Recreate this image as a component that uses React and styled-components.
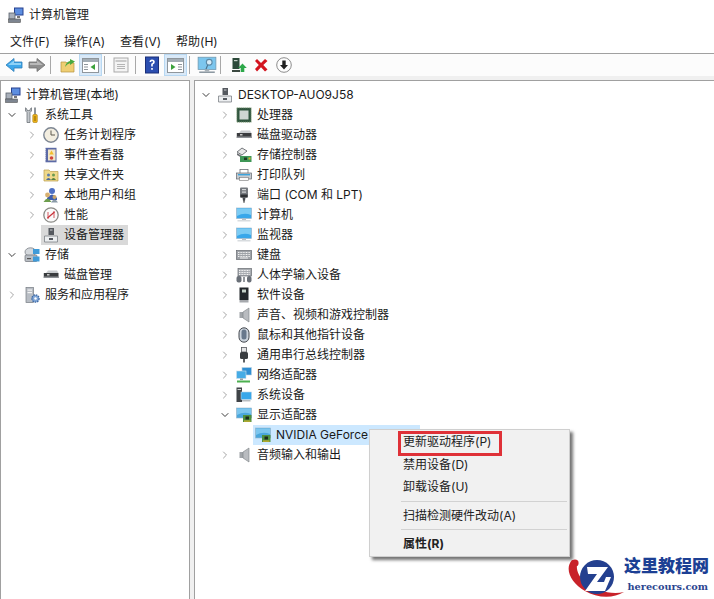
import React from "react";
import styled, { createGlobalStyle } from "styled-components";
import { ChevronRight, ChevronDown } from "lucide-react";

const GlobalStyle = createGlobalStyle`
  html, body { margin: 0; padding: 0; height: 100%; background: #fff; overflow: hidden; }
  #root { height: 100%; }
`;

// little device icons, all on a 16x16 grid
const glyphs = {
  mgmt: (
    <>
      <rect x="6" y="0.5" width="9.5" height="8" fill="#27408f" />
      <rect x="7" y="1.5" width="7.5" height="6" fill="#5d8ee0" />
      <rect x="1" y="6" width="6" height="6" fill="#a9b0ba" stroke="#59616c" strokeWidth="0.8" />
      <rect x="0.5" y="12" width="12" height="3.5" fill="#7d8590" stroke="#555" strokeWidth="0.6" />
      <rect x="9" y="9" width="3" height="2" fill="#777" />
    </>
  ),
  tools: (
    <>
      <path d="M1.5 0.8 V4 L3 5.5 V15.5 H6 V5.5 L7.5 4 V0.8 L6 2.2 V3.6 H3 V2.2 z" fill="#c4c8cc" stroke="#5e646b" strokeWidth="0.7" />
      <rect x="10" y="0.5" width="2" height="7" fill="#8f959b" />
      <rect x="8.8" y="7.5" width="4.5" height="8" rx="1" fill="#eeb418" stroke="#a87a10" strokeWidth="0.6" />
      <rect x="10.5" y="9" width="1" height="5" fill="#8a6206" />
    </>
  ),
  clock: (
    <>
      <circle cx="8" cy="8" r="7.2" fill="#f3eee0" stroke="#7d8692" strokeWidth="1.4" />
      <path d="M8 3.5 V8 H12" fill="none" stroke="#5e5a4e" strokeWidth="1" />
    </>
  ),
  event: (
    <>
      <rect x="2.5" y="0.8" width="11" height="14.5" fill="#5c6aa6" />
      <path d="M2.5 2 v12" stroke="#d3d6e6" strokeWidth="1" strokeDasharray="1 1" />
      <rect x="5" y="2.5" width="7.5" height="11" fill="#f2e6c8" />
      <path d="M8.5 3.5 l2.3 4 h-4.6 z" fill="#f2bd2c" />
      <circle cx="8.5" cy="11" r="1.8" fill="#d2463c" />
    </>
  ),
  shared: (
    <>
      <path d="M1 3 h5 l1.5 1.5 H15 V14 H1 z" fill="#efd98a" stroke="#b99c4c" strokeWidth="0.7" />
      <circle cx="5.5" cy="8" r="1.5" fill="#5c7fb0" />
      <path d="M3 13 q2.5-4 5 0 z" fill="#4f6b97" />
      <circle cx="10.5" cy="8" r="1.5" fill="#6a9b52" />
      <path d="M8 13 q2.5-4 5 0 z" fill="#57803f" />
    </>
  ),
  users: (
    <>
      <circle cx="9" cy="4" r="3" fill="#4e70c4" />
      <path d="M4 11 q5-7 10 0 v2 H4 z" fill="#3d5dae" />
      <circle cx="4.5" cy="8" r="2.4" fill="#d8b070" />
      <path d="M0.5 15 q4-7 8 0 z" fill="#6d9e4e" />
      <circle cx="11.5" cy="10" r="2" fill="#c8a468" />
      <path d="M8 15.5 q3.5-6 7 0 z" fill="#8a9aa8" />
    </>
  ),
  perf: (
    <>
      <circle cx="8" cy="8" r="7.2" fill="#fafafa" stroke="#8a8a86" strokeWidth="1.3" />
      <path d="M4.5 11 L11.5 5" stroke="#c8323a" strokeWidth="1.3" />
      <path d="M5 12 V5 M11 11 V4" fill="none" stroke="#c8323a" strokeWidth="0.8" />
    </>
  ),
  device: (
    <>
      <rect x="5.5" y="1" width="5.5" height="7" fill="#55595f" />
      <rect x="7" y="2.5" width="2.5" height="1" fill="#c9ccd0" />
      <path d="M1.5 9 h13 V15 H1.5 z" fill="#eceef0" stroke="#7d8187" strokeWidth="0.8" />
      <rect x="6" y="11" width="4" height="2" fill="#55595f" />
    </>
  ),
  storage: (
    <>
      <ellipse cx="6.5" cy="5" rx="5.5" ry="4.2" fill="#d4d8dc" stroke="#7b8087" strokeWidth="0.8" />
      <rect x="1" y="8" width="12" height="6.5" rx="1" fill="#b9bec4" stroke="#6b7077" strokeWidth="0.7" />
      <rect x="9" y="2" width="6.5" height="5" fill="#3f9bd9" />
      <rect x="9" y="9.5" width="6.5" height="5" fill="#3f9bd9" />
      <rect x="3" y="11" width="4" height="1.2" fill="#555" />
    </>
  ),
  disk: (
    <>
      <path d="M3 6 L5 3.5 H14 L15.5 6 z" fill="#c9cccf" />
      <rect x="0.8" y="6" width="14.7" height="5" fill="#3a3c3f" />
      <rect x="0.8" y="9.5" width="14.7" height="1.5" fill="#8e9196" />
      <rect x="4" y="7.2" width="2.5" height="1.2" fill="#e9e9e9" />
    </>
  ),
  services: (
    <>
      <rect x="2" y="0.5" width="7.5" height="15" fill="#b8bdc4" stroke="#767b82" strokeWidth="0.7" />
      <rect x="3.5" y="2.5" width="4.5" height="1.2" fill="#f4f4f4" />
      <rect x="3.5" y="5" width="4.5" height="1.2" fill="#f4f4f4" />
      <circle cx="11.5" cy="11.5" r="3.6" fill="#7fa5d6" stroke="#3f6aa6" strokeWidth="1.3" strokeDasharray="1.6 0.8" />
      <circle cx="11.5" cy="11.5" r="1.2" fill="#fff" />
    </>
  ),
  cpu: (
    <>
      <rect x="0.8" y="0.8" width="14.4" height="14.4" fill="#31563f" stroke="#9ab18c" strokeWidth="0.8" strokeDasharray="1 1" />
      <rect x="3.5" y="3.5" width="9" height="9" fill="#cfd6d2" />
    </>
  ),
  controller: (
    <>
      <path d="M1 5 L6 1 l5 3 -5 4 z" fill="#e7e7e7" stroke="#56595e" strokeWidth="0.8" />
      <path d="M1 6 L6 9 v2 L1 8 z" fill="#6c6f73" />
      <rect x="4" y="9" width="11.5" height="6" fill="#3f9757" />
      <rect x="8" y="10.5" width="3" height="2.5" fill="#1d3b24" />
      <rect x="12.5" y="10.5" width="2" height="2" fill="#d7b42c" />
    </>
  ),
  printer: (
    <>
      <rect x="4" y="2.5" width="8" height="4" fill="#fff" stroke="#6d7177" strokeWidth="0.8" />
      <rect x="0.5" y="6" width="15" height="6" fill="#c6cbd0" stroke="#62666c" strokeWidth="0.7" />
      <rect x="2" y="7" width="12" height="1.4" fill="#3aa3dd" />
      <rect x="3.5" y="10.5" width="9" height="3" fill="#fafafa" stroke="#777" strokeWidth="0.6" />
    </>
  ),
  port: (
    <>
      <rect x="4" y="0.5" width="8" height="10" rx="1" fill="#75797e" />
      <rect x="6" y="2" width="4" height="1.2" fill="#d4d6d8" />
      <rect x="6" y="4.5" width="4" height="1.2" fill="#d4d6d8" />
      <rect x="4.5" y="7.5" width="7" height="3" fill="#2f3134" />
      <path d="M6.5 10.5 h3 l-.5 3.2 h-2 z" fill="#46494d" />
      <rect x="7.4" y="13.5" width="1.2" height="2.2" fill="#333" />
    </>
  ),
  monitor: (
    <>
      <rect x="0.5" y="1" width="15" height="10.5" fill="#38a7ea" stroke="#9ab4c8" strokeWidth="0.6" />
      <path d="M1 1.5 H15 V8 Q8 5 1 9 z" fill="#7ccbf3" />
      <rect x="6" y="11.5" width="4" height="1.5" fill="#b9c0c6" />
      <rect x="1.5" y="13" width="13" height="1.5" fill="#d8dcdf" />
    </>
  ),
  keyboard: (
    <>
      <rect x="0.5" y="3.5" width="15" height="9" fill="#9fa3a8" stroke="#666a6f" strokeWidth="0.7" />
      <path d="M2 5.5 h12 M2 7.5 h12 M2 9.5 h12" stroke="#f2f2f2" strokeWidth="1" strokeDasharray="1 .6" />
      <rect x="4" y="10.5" width="8" height="1" fill="#eee" />
    </>
  ),
  hid: (
    <>
      <rect x="2" y="1.5" width="13.5" height="7.5" fill="#a9adb2" stroke="#666a6f" strokeWidth="0.7" />
      <path d="M3 3.5 h11 M3 5.5 h11 M3 7.5 h11" stroke="#f4f4f4" strokeWidth="1" strokeDasharray="1 .6" />
      <rect x="0.5" y="9" width="5" height="6.5" rx="2" fill="#6a7078" />
      <rect x="11" y="9" width="4.5" height="6.5" rx="2" fill="#6a7078" />
      <rect x="7" y="10" width="2" height="5" fill="#93979c" />
    </>
  ),
  software: (
    <>
      <rect x="3.5" y="0.5" width="9" height="12.5" fill="#23272b" />
      <rect x="6" y="2.5" width="4" height="3" fill="#c5d1c8" />
      <rect x="3.5" y="13" width="9" height="2.5" fill="#a6a9ad" />
    </>
  ),
  sound: (
    <>
      <rect x="3.5" y="5" width="3.5" height="6" fill="#a2a6aa" />
      <path d="M7 5 L13 1 V15 L7 11 z" fill="#b9bcc0" stroke="#7b7f83" strokeWidth="0.6" />
    </>
  ),
  mouse: (
    <>
      <rect x="3" y="0.8" width="10" height="14.4" rx="5" fill="#cbd3dc" stroke="#44484e" strokeWidth="1" />
      <rect x="5.5" y="2.5" width="5" height="10" rx="2.5" fill="#68788c" />
    </>
  ),
  usb: (
    <>
      <rect x="5.5" y="0.5" width="5" height="4.5" fill="#e4e5e6" stroke="#55585c" strokeWidth="0.8" />
      <rect x="4" y="5" width="8" height="7" rx="1.5" fill="#3a3d41" />
      <rect x="7" y="12" width="2" height="3.5" fill="#5c5f63" />
    </>
  ),
  network: (
    <>
      <rect x="6" y="0.5" width="9.5" height="7.5" fill="#2f8fd3" stroke="#bcd4e4" strokeWidth="0.6" />
      <rect x="0.5" y="4" width="9.5" height="7.5" fill="#46ace6" stroke="#cfe0ea" strokeWidth="0.6" />
      <rect x="4" y="11.5" width="3" height="1.5" fill="#9aa0a5" />
      <rect x="1" y="13.5" width="13" height="2" fill="#4cb050" />
    </>
  ),
  system: (
    <>
      <rect x="0.5" y="0.5" width="5.5" height="14.5" fill="#3f4347" />
      <rect x="1.5" y="2" width="3.5" height="1" fill="#cfcfcf" />
      <rect x="5" y="5" width="10.5" height="7.5" fill="#38a7ea" stroke="#bcd4e4" strokeWidth="0.6" />
      <rect x="6" y="13" width="8.5" height="1.5" fill="#b9bec2" />
    </>
  ),
  display: (
    <>
      <rect x="0.5" y="1" width="15" height="10" fill="#4aa7dc" stroke="#9ab4c8" strokeWidth="0.6" />
      <path d="M1 1.5 H15 V7 Q8 4 1 8 z" fill="#7cc6ee" />
      <rect x="7" y="8" width="8.5" height="7" fill="#4d8f3f" />
      <rect x="9.5" y="9.5" width="3.5" height="3" fill="#1b2a1d" />
      <rect x="8" y="13.5" width="6.5" height="1.2" fill="#d7b42c" />
    </>
  ),
};

const Icon = styled.svg`
  width: ${(p) => p.$w || p.$size || 16}px;
  height: ${(p) => p.$h || p.$size || 16}px;
  flex: none;
  display: block;
`;

const Dev = ({ name }) => <Icon viewBox="0 0 16 16">{glyphs[name]}</Icon>;

const Window = styled.div`
  width: 714px;
  height: 599px;
  position: relative;
  overflow: hidden;
  display: flex;
  flex-direction: column;
  background: #fff;
  color: #1a1a1a;
  font: 12px/20px Inter, "Noto Sans CJK SC", sans-serif;
`;

const TitleBar = styled.div`
  height: 30px;
  display: flex;
  align-items: center;
  gap: 5px;
  padding-left: 8px;
  box-sizing: border-box;
  color: #222;
`;

const MenuBar = styled.div`
  height: 23px;
  display: flex;
  align-items: center;
  padding: 1px 0 0 10px;
  box-sizing: border-box;
  gap: 17px;
  height: 24px;
  border-bottom: 1px solid #a0a0a0;
`;

const MenuName = styled.span`
  width: ${(p) => p.$w || 39}px;
  white-space: nowrap;
`;

const ToolBar = styled.div`
  height: 22px;
  display: flex;
  align-items: center;
  padding-left: 2px;
  background: #fcfcfc;
`;

const ToolBtn = styled.div`
  width: ${(p) => p.$w || 23}px;
  height: 22px;
  margin-left: ${(p) => p.$ml || 0}px;
  box-sizing: border-box;
  display: flex;
  align-items: center;
  justify-content: center;
  background: ${(p) => (p.$on ? "#d9e9f8" : "transparent")};
  border: 1px solid ${(p) => (p.$on ? "#b8d8f2" : "transparent")};
`;

const ToolSep = styled.div`
  width: 1px;
  height: 18px;
  background: #a8a8a8;
  margin: 0 ${(p) => p.$r}px 0 ${(p) => p.$l}px;
`;

const Panes = styled.div`
  flex: 1;
  min-height: 0;
  display: grid;
  grid-template-columns: 190px 1fr;
  column-gap: 4px;
  background: #f0f0f0;
  padding-top: 4px;
`;

const Pane = styled.div`
  background: #fff;
  border: 1px solid #a0a0a0;
  border-bottom: 0;
  border-right-width: ${(p) => (p.$first ? 1 : 0)}px;
  padding: 4px 0 0;
  min-width: 0;
`;

const Row = styled.div`
  height: 20px;
  display: flex;
  align-items: center;
  padding-left: ${(p) => p.$indent}px;
  white-space: nowrap;
`;

const Twisty = styled.span`
  width: ${(p) => p.$w}px;
  flex: none;
  display: flex;
  color: ${(p) => (p.$open ? "#3c3c3c" : "#a6a6a6")};
`;

const RowBody = styled.span`
  display: flex;
  align-items: center;
  gap: 5px;
  height: 20px;
  padding: 0 1px 0 ${(p) => p.$pad || 0}px;
  background: ${(p) => p.$bg || "transparent"};
  min-width: ${(p) => p.$min || 0}px;
  box-sizing: border-box;
`;

const Menu = styled.div`
  position: absolute;
  left: 369px;
  top: 429px;
  width: 201px;
  height: 128px;
  box-sizing: border-box;
  padding: 1px 2px 0;
  background: #f1f1f1;
  border: 1px solid #cfcfcf;
  box-shadow: 3px 3px 3px rgba(0, 0, 0, 0.55);
`;

const MenuItem = styled.div`
  height: 22.5px;
  line-height: 22.5px;
  padding-left: 31px;
  font-weight: ${(p) => (p.$strong ? 700 : 400)};
  color: #222;
`;

const MenuRule = styled.div`
  height: 1px;
  margin: 2px 0 3px 29px;
  background: #d2d2d2;
`;

const RedMark = styled.div`
  position: absolute;
  left: 28px;
  top: 1px;
  width: 104px;
  height: 25px;
  box-sizing: border-box;
  border: 3px solid #df3138;
`;

const Stamp = styled.div`
  position: absolute;
  left: 567px;
  top: 555px;
  width: 147px;
  height: 44px;
  display: flex;
  align-items: flex-start;
`;

const StampText = styled.div`
  display: flex;
  flex-direction: column;
  align-items: flex-end;
  width: 85px;
`;

const StampCn = styled.div`
  font: 900 17px/20px "Noto Sans CJK SC", sans-serif;
  color: #1c3f94;
  white-space: nowrap;
`;

const StampEn = styled.div`
  font: 700 9.7px/12px "DejaVu Serif", serif;
  color: #2b4590;
  margin: 6px 1px 0 0;
  white-space: nowrap;
`;

const Chev = ({ open, w }) => (
  <Twisty $open={open} $w={w}>
    {open ? <ChevronDown size={12} strokeWidth={2} /> : <ChevronRight size={12} strokeWidth={2} />}
  </Twisty>
);

const leftTree = [
  { id: "mgmt", text: "计算机管理(本地)", indent: 4 },
  { id: "tools", text: "系统工具", indent: 5, open: true, twist: 18 },
  { id: "clock", text: "任务计划程序", indent: 25, closed: true, twist: 17 },
  { id: "event", text: "事件查看器", indent: 25, closed: true, twist: 17 },
  { id: "shared", text: "共享文件夹", indent: 25, closed: true, twist: 17 },
  { id: "users", text: "本地用户和组", indent: 25, closed: true, twist: 17 },
  { id: "perf", text: "性能", indent: 25, closed: true, twist: 17 },
  { id: "device", text: "设备管理器", indent: 40, bg: "#d9d9d9", pad: 2, min: 87 },
  { id: "storage", text: "存储", indent: 5, open: true, twist: 18 },
  { id: "disk", text: "磁盘管理", indent: 42 },
  { id: "services", text: "服务和应用程序", indent: 5, closed: true, twist: 18 },
];

const rightTree = [
  { id: "device", text: "DESKTOP-AUO9J58", indent: 5, open: true, twist: 17 },
  { id: "cpu", text: "处理器" },
  { id: "disk", text: "磁盘驱动器" },
  { id: "controller", text: "存储控制器" },
  { id: "printer", text: "打印队列" },
  { id: "port", text: "端口 (COM 和 LPT)" },
  { id: "monitor", text: "计算机" },
  { id: "monitor", text: "监视器" },
  { id: "keyboard", text: "键盘" },
  { id: "hid", text: "人体学输入设备" },
  { id: "software", text: "软件设备" },
  { id: "sound", text: "声音、视频和游戏控制器" },
  { id: "mouse", text: "鼠标和其他指针设备" },
  { id: "usb", text: "通用串行总线控制器" },
  { id: "network", text: "网络适配器" },
  { id: "system", text: "系统设备" },
  { id: "display", text: "显示适配器", open: true },
  // the menu covers the rest of the adapter name
  { id: "display", text: "NVIDIA GeForce", indent: 58, bg: "#cce8ff", min: 167, pad: 2 },
  { id: "sound", text: "音频输入和输出" },
].map((r) => (r.indent ? r : { ...r, indent: 24, twist: 17, closed: !r.open }));

const TreeRow = ({ row }) => (
  <Row $indent={row.indent}>
    {(row.open || row.closed) && <Chev open={row.open} w={row.twist} />}
    <RowBody $bg={row.bg} $min={row.min} $pad={row.pad}>
      <Dev name={row.id} />
      <span>{row.text}</span>
    </RowBody>
  </Row>
);

function ToolIcons() {
  return (
    <ToolBar>
      <ToolBtn>
        <Icon $size={18} viewBox="0 0 18 18">
          <path d="M1 9 L9 2.5 V6 H17 V12 H9 V15.5 z" fill="#3ea7ea" stroke="#2b7cb8" strokeWidth="0.8" />
          <path d="M3 9 L9 4.5 V7 H16 V9 z" fill="#8ed2f7" />
        </Icon>
      </ToolBtn>
      <ToolBtn>
        <Icon $size={18} viewBox="0 0 18 18">
          <path d="M17 9 L9 2.5 V6 H1 V12 H9 V15.5 z" fill="#8e8e8e" stroke="#6e6e6e" strokeWidth="0.8" />
          <path d="M15 9 L9 4.5 V7 H2 V9 z" fill="#b9b9b9" />
        </Icon>
      </ToolBtn>
      <ToolSep $l={2} $r={5} />
      <ToolBtn>
        <Icon viewBox="0 0 16 16">
          <path d="M1 5 h5 l1 1 h7 V15 H1 z" fill="#efce73" stroke="#b5943f" strokeWidth="0.7" />
          <path d="M5 10 Q6 5 10 4 V2 L15 4.5 L10 8 V6 Q7 7 5 10 z" fill="#49a93f" />
        </Icon>
      </ToolBtn>
      <ToolBtn $on>
        <Icon $size={17} viewBox="0 0 17 17">
          <rect x="0.5" y="1.5" width="16" height="14" fill="#fff" stroke="#8f969c" />
          <rect x="1" y="2" width="15" height="3" fill="#a3adb5" />
          <rect x="2" y="7" width="4" height="1" fill="#8f969c" />
          <rect x="2" y="9.5" width="4" height="1" fill="#8f969c" />
          <rect x="2" y="12" width="4" height="1" fill="#8f969c" />
          <path d="M13 7 L8.5 10 L13 13 z" fill="#3ca23c" />
        </Icon>
      </ToolBtn>
      <ToolSep $l={2} $r={4} />
      <ToolBtn>
        <Icon viewBox="0 0 16 16">
          <rect x="1" y="1" width="14" height="14" fill="#f4f4f4" stroke="#a9a9a9" />
          <rect x="2.5" y="3" width="11" height="2" fill="#c9c9c9" />
          <path d="M4 7.5 h8 M4 9.5 h8 M4 11.5 h8" stroke="#b5b5b5" />
        </Icon>
      </ToolBtn>
      <ToolSep $l={3} $r={4} />
      <ToolBtn>
        <Icon $size={18} viewBox="0 0 18 18">
          <rect x="2.5" y="1" width="13" height="16" fill="#2b4eb0" stroke="#1b2f78" />
          <path d="M6.5 6 Q6.5 3.5 9 3.5 Q11.8 3.5 11.8 6 Q11.8 7.5 9.8 8.6 V10.5 H8.2 V7.8 Q10 7 10 6 Q10 5 9 5 Q8.2 5 8.2 6 z" fill="#fff" />
          <rect x="8.2" y="12" width="1.6" height="1.8" fill="#fff" />
        </Icon>
      </ToolBtn>
      <ToolBtn $on $ml={1}>
        <Icon $size={17} viewBox="0 0 17 17">
          <rect x="0.5" y="1.5" width="16" height="14" fill="#fff" stroke="#8f969c" />
          <rect x="1" y="2" width="15" height="3" fill="#a3adb5" />
          <rect x="11" y="7" width="4" height="1" fill="#8f969c" />
          <rect x="11" y="9.5" width="4" height="1" fill="#8f969c" />
          <rect x="11" y="12" width="4" height="1" fill="#8f969c" />
          <path d="M4 7 L8.5 10 L4 13 z" fill="#3ca23c" />
        </Icon>
      </ToolBtn>
      <ToolSep $l={2} $r={4} />
      <ToolBtn $w={25}>
        <Icon $size={20} viewBox="0 0 18 18">
          <rect x="1" y="2" width="16" height="11" fill="#7cc6ee" stroke="#6f98b0" strokeWidth="0.7" />
          <path d="M8 13 L10 8" stroke="#4a6f8a" />
          <circle cx="11" cy="6.5" r="2.6" fill="#d7ecf8" stroke="#5c8aa8" />
          <path d="M2 15.5 H16" stroke="#8d99a2" strokeWidth="1.4" />
          <rect x="7" y="13" width="4" height="2" fill="#a9b2b8" />
        </Icon>
      </ToolBtn>
      <ToolSep $l={1} $r={6} />
      <ToolBtn>
        <Icon $size={16} viewBox="0 0 16 16">
          <rect x="1.5" y="1" width="7" height="11" fill="#2c4a3a" />
          <rect x="3" y="3" width="3.5" height="1.2" fill="#c7d2cb" />
          <rect x="1" y="13" width="8" height="2" fill="#3c4a42" />
          <path d="M11.5 6.5 L15.8 11 H13.3 V15 H9.7 V11 H7.2 z" fill="#2da84a" />
        </Icon>
      </ToolBtn>
      <ToolBtn $w={22}>
        <Icon $size={16} viewBox="0 0 16 16">
          <path d="M2 4 L4 2 L8 6 L12 2 L14.5 4 L10.3 8 L14.5 12.5 L12 14.5 L8 10.3 L4 14.5 L2 12 L5.8 8 z" fill="#d3141f" />
        </Icon>
      </ToolBtn>
      <ToolBtn>
        <Icon $size={16} viewBox="0 0 16 16">
          <circle cx="8" cy="8" r="7.3" fill="#fdfdfd" stroke="#8d8d8d" />
          <path d="M6.3 3.5 H9.7 V8 H12 L8 12.5 L4 8 H6.3 z" fill="#1f1f1f" />
        </Icon>
      </ToolBtn>
    </ToolBar>
  );
}

export default function App() {
  return (
    <Window>
      <GlobalStyle />
      <TitleBar>
        <Dev name="mgmt" />
        <span>计算机管理</span>
      </TitleBar>
      <MenuBar>
        <MenuName $w={37}>文件(F)</MenuName>
        <MenuName>操作(A)</MenuName>
        <MenuName>查看(V)</MenuName>
        <MenuName>帮助(H)</MenuName>
      </MenuBar>
      <ToolIcons />
      <Panes>
        <Pane $first>
          {leftTree.map((r) => (
            <TreeRow key={r.text} row={r} />
          ))}
        </Pane>
        <Pane>
          {rightTree.map((r) => (
            <TreeRow key={r.text} row={r} />
          ))}
        </Pane>
      </Panes>

      <Menu>
        <RedMark />
        <MenuItem>更新驱动程序(P)</MenuItem>
        <MenuItem>禁用设备(D)</MenuItem>
        <MenuItem>卸载设备(U)</MenuItem>
        <MenuRule />
        <MenuItem>扫描检测硬件改动(A)</MenuItem>
        <MenuRule />
        <MenuItem $strong>属性(R)</MenuItem>
      </Menu>

      <Stamp>
        <Icon $w={57} $h={44} viewBox="0 0 57 44">
          <circle cx="8" cy="8" r="3.6" fill="#c8222a" />
          <path d="M5 5 C-3 14 4 28 18 36 C30 43 46 44 57 37 C45 40 28 36 18 27 C11 21 8 13 11 6 z" fill="#c8222a" />
          <circle cx="30" cy="22" r="17" fill="#24408f" />
          <path d="M20 12 H41 L30 27 H37 L39 22 H44 L38 36 H18 L30 19 H21 z" fill="#fff" />
        </Icon>
        <StampText>
          <StampCn>这里教程网</StampCn>
          <StampEn>herecours.com</StampEn>
        </StampText>
      </Stamp>
    </Window>
  );
}
